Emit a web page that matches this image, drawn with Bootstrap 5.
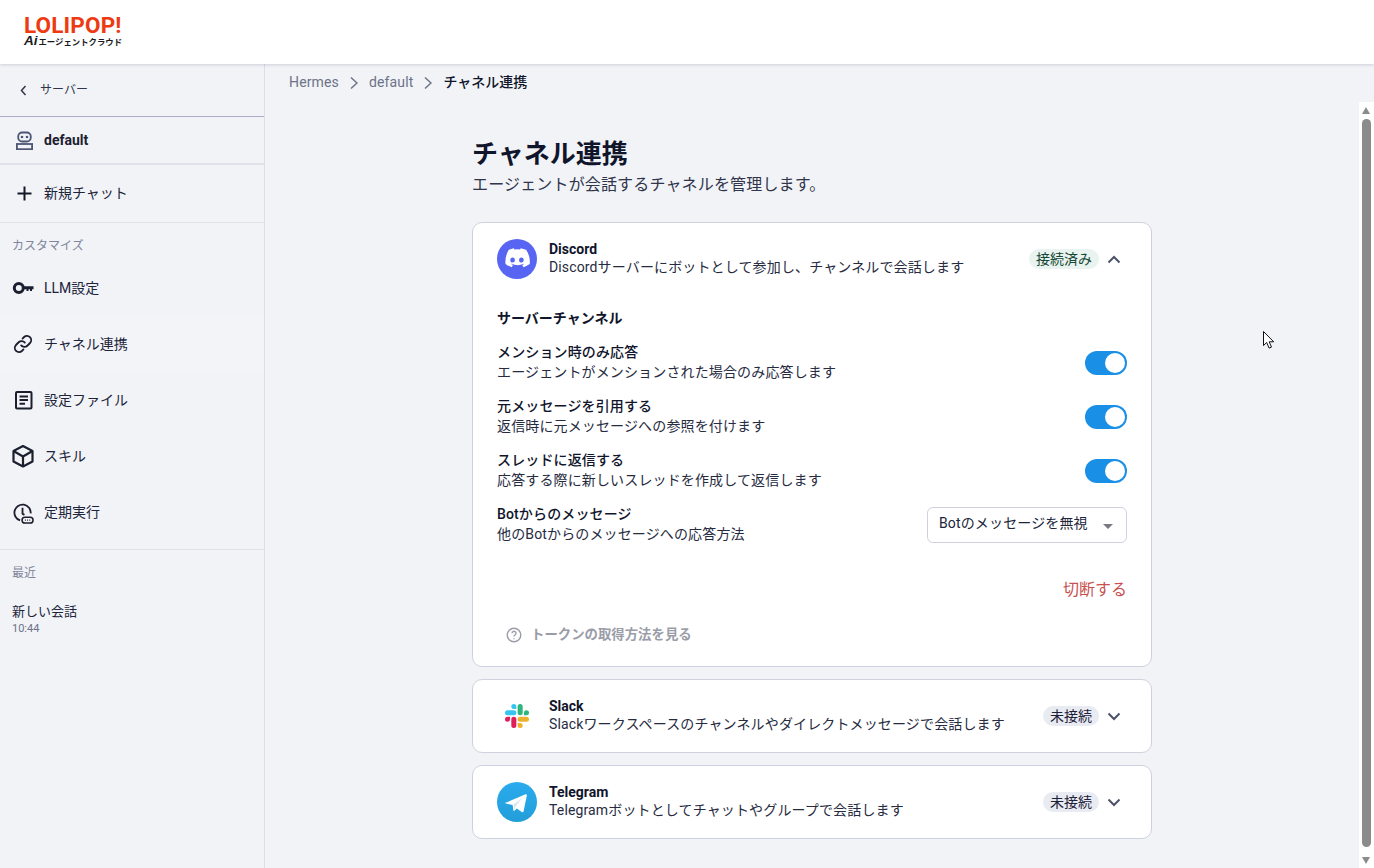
<!DOCTYPE html>
<html lang="ja">
<head>
    <meta charset="UTF-8">
    <meta name="viewport" content="width=device-width, initial-scale=1.0">
    <title>チャネル連携</title>
    <link href="https://cdn.jsdelivr.net/npm/bootstrap@5.3.0/dist/css/bootstrap.min.css" rel="stylesheet">
    <style>
        html, body { height: 100%; overflow: hidden; }
        body {
            background: #f1f3f7;
            color: #10152b;
            font-family: Roboto, "Noto Sans CJK JP", sans-serif;
            font-size: 14px;
        }
        .top-bar {
            height: 64px;
            background: #fff;
            box-shadow: 0 1px 3px rgba(20, 25, 50, .16);
            position: relative;
            z-index: 2;
            padding: 0 0 3px 24px;
        }
        .logo-main { color: #ee3a12; font: 700 22.5px/20px Roboto, sans-serif; letter-spacing: .15px; }
        .logo-sub { color: #1a1a22; font: 700 8.4px/12px "Noto Sans CJK JP", sans-serif; white-space: nowrap; }
        .logo-sub i { font: italic 900 13.5px/0 "Liberation Sans", sans-serif; margin-right: 1px; }
        .page-body { height: 804px; }
        .side-bar { width: 265px; border-right: 1px solid #dcdee6; flex: none; }
        .side-back { height: 53px; padding-left: 20px; border-bottom: 1px solid #a9aec6; font-size: 12px; color: #30354a; gap: 13px; }
        .side-server { height: 48px; padding-left: 16px; border-bottom: 2px solid #e0e2ea; font-weight: 700; gap: 11px; color: #1c2030; }
        .side-new { height: 58px; padding-left: 16px; border-bottom: 1px solid #e0e2ea; gap: 11px; color: #20243a; }
        .side-label { font-size: 12px; color: #80859a; padding: 14px 0 0 12px; margin-bottom: 5px; }
        .side-item { height: 56px; padding-left: 12px; gap: 10px; color: #20243a; }
        .side-item.is-current { background: #f3f4f8; }
        .side-recent { border-top: 1px solid #e0e2ea; margin-top: 9px; }
        .recent-entry { padding: 16px 0 0 12px; }
        .recent-name { color: #20243a; font-size: 13px; line-height: 18px; }
        .recent-time { color: #6d7288; font-size: 11px; line-height: 14px; margin-top: 1px; }
        .crumbs { height: 38px; padding: 8px 0 0 24px; color: #6d7288; gap: 11px; }
        .crumbs span { letter-spacing: .01em; }
        .crumbs b { color: #10152b; font-weight: 500; }
        .scroll-zone { height: 766px; }
        .scroll-inner { flex: 1; }
        .content-col { width: 680px; margin-left: 207px; padding-top: 33px; }
        .page-title { font-size: 26px; font-weight: 700; line-height: 38px; margin: 0; color: #10152b; }
        .page-sub { font-size: 16px; line-height: 24px; color: #30354a; margin-bottom: 25px; letter-spacing: .01em; }
        .chan-card { background: #fff; border: 1px solid #cfd2de; border-radius: 10px; margin-bottom: 12px; padding: 16px 24px; }
        .chan-card.is-open { padding-bottom: 20px; }
        .chan-head { height: 40px; }
        .chan-text { padding-bottom: 2px; }
        .chan-title { font-weight: 700; line-height: 18px; }
        .chan-desc { line-height: 18px; color: #272b3f; letter-spacing: .01em; }
        .chan-icon { width: 40px; height: 40px; flex: none; margin-right: 12px; }
        .pill { border-radius: 10px; padding: 0 7px; line-height: 20px; margin-right: 8px; }
        .pill-ok { background: #e9f4f0; color: #154734; }
        .pill-off { background: #e9ebf2; color: #1d2238; }
        .chev { margin-right: 6px; }
        .sect-title { font-weight: 700; line-height: 20px; margin-top: 29px; margin-bottom: 10px; }
        .opt-row { height: 54px; padding-bottom: 4px; }
        .opt-text { margin-bottom: 2px; letter-spacing: .01em; }
        .opt-name { font-weight: 500; line-height: 20px; }
        .opt-desc { line-height: 20px; color: #272b3f; }
        .switch-on { width: 42px; height: 24px; border-radius: 12px; background: #1a8fe6; padding: 2px; }
        .switch-on span { width: 20px; height: 20px; border-radius: 50%; background: #fff; }
        .fake-select { width: 200px; height: 36px; border: 1px solid #cfd2de; border-radius: 6px; padding: 0 13px 0 11px; color: #20243a; letter-spacing: .01em; }
        .fake-select span { margin-bottom: 3px; }
        .fake-select i { border-left: 5px solid transparent; border-right: 5px solid transparent; border-top: 5px solid #7a7a82; margin-top: 3px; }
        .cut-link { color: #c9504f; font-size: 16px; line-height: 22px; margin-top: 25px; }
        .help-link { color: #9a9da8; font-size: 13.4px; font-weight: 700; gap: 9px; margin-top: 23px; padding-left: 9px; line-height: 22px; }
        .bar-track { width: 15px; background: #fff; flex: none; position: relative; }
        .bar-thumb { position: absolute; left: 3px; top: 17px; bottom: 21px; width: 9px; border-radius: 5px; background: #8b8b8b; }
        .bar-up, .bar-down { position: absolute; left: 3px; border-left: 4.5px solid transparent; border-right: 4.5px solid transparent; }
        .bar-up { top: 5px; border-bottom: 7px solid #8b8b8b; }
        .bar-down { bottom: 4px; border-top: 7px solid #8b8b8b; }
        .mouse-mark { position: absolute; left: 1263px; top: 331px; z-index: 5; }
    </style>
</head>
<body>
    <header class="top-bar d-flex flex-column justify-content-center">
        <div class="logo-main">LOLIPOP!</div>
        <div class="logo-sub"><i>Ai</i>エージェントクラウド</div>
    </header>

    <div class="page-body d-flex">
        <aside class="side-bar">
            <div class="side-back d-flex align-items-center">
                <svg width="7" height="11" viewBox="0 0 7 11" fill="none" stroke="#30354a" stroke-width="1.5"><path d="M5.5 1 1.5 5.500l4 4.500"/></svg>
                <span>サーバー</span>
            </div>
            <div class="side-server d-flex align-items-center">
                <svg width="17" height="19" viewBox="0 0 17 19" fill="none" stroke="#4d5674" stroke-width="1.8"><rect x="2.200" y="1.500" width="12.600" height="9" rx="4"/><rect x=".9" y="13" width="15.200" height="5.200"/><circle cx="6" cy="6" r="1.300" fill="#4d5674" stroke="none"/><circle cx="11" cy="6" r="1.300" fill="#4d5674" stroke="none"/></svg>
                <span>default</span>
            </div>
            <div class="side-new d-flex align-items-center">
                <svg width="17" height="17" viewBox="0 0 17 17" fill="none" stroke="#14172a" stroke-width="2"><path d="M8.500 1.500v14M1.500 8.500h14"/></svg>
                <span>新規チャット</span>
            </div>
            <div class="side-label">カスタマイズ</div>
            <div class="side-item d-flex align-items-center">
                <svg width="22" height="22" viewBox="0 0 22 22" fill="none"><circle cx="6.800" cy="11" r="4.500" stroke="#1b1e2e" stroke-width="3"/><path d="M11 9.300h10.500v3H20V14h-2v-1.700h-1.500V14h-2v-1.700H11z" fill="#1b1e2e"/></svg>
                <span>LLM設定</span>
            </div>
            <div class="side-item is-current d-flex align-items-center">
                <svg width="22" height="22" viewBox="0 0 24 24" fill="none" stroke="#1b1e2e" stroke-width="2" stroke-linecap="round"><path d="M10 13.500a4.500 4.500 0 0 0 6.700.4l3-3a4.600 4.600 0 0 0-6.500-6.500l-1.700 1.700"/><path d="M14 10.500a4.500 4.500 0 0 0-6.700-.4l-3 3a4.600 4.600 0 0 0 6.500 6.500l1.700-1.700"/></svg>
                <span>チャネル連携</span>
            </div>
            <div class="side-item d-flex align-items-center">
                <svg width="22" height="22" viewBox="0 0 22 22" fill="none" stroke="#1b1e2e" stroke-width="2"><rect x="4" y="3" width="15.500" height="16.500" rx="1"/><path d="M7.500 7.500h8.500M7.500 11h8.500M7.500 14.800h5.500"/></svg>
                <span>設定ファイル</span>
            </div>
            <div class="side-item d-flex align-items-center">
                <svg width="22" height="24" viewBox="0 0 22 24" fill="none" stroke="#1b1e2e" stroke-width="2.200" stroke-linejoin="round"><path d="M11 2 20.500 7v10.500L11 22.500 1.500 17.500V7z"/><path d="M1.500 7 11 12.500 20.500 7M11 12.500v10"/></svg>
                <span>スキル</span>
            </div>
            <div class="side-item d-flex align-items-center">
                <svg width="22" height="23" viewBox="0 0 23 24" fill="none" stroke="#1b1e2e" stroke-width="1.900"><path d="M8.500 20.300A8.500 8.500 0 1 1 19.500 13"/><path d="M11 7v6.300l2 1.200"/><rect x="10.500" y="17" width="11.500" height="6" rx="3" stroke-width="1.600"/><path d="M13.500 20h1M15.800 20h1M18.100 20h1" stroke-width="1.500"/></svg>
                <span>定期実行</span>
            </div>
            <div class="side-recent">
                <div class="side-label">最近</div>
                <div class="recent-entry">
                    <div class="recent-name">新しい会話</div>
                    <div class="recent-time">10:44</div>
                </div>
            </div>
        </aside>

        <main class="flex-grow-1">
            <nav class="crumbs d-flex align-items-start">
                <span>Hermes</span>
                <svg class="mt-1" width="8" height="14" viewBox="0 0 8 14" fill="none" stroke="#6d7288" stroke-width="1.500"><path d="m1 1.500 6 5.500-6 5.500"/></svg>
                <span>default</span>
                <svg class="mt-1" width="8" height="14" viewBox="0 0 8 14" fill="none" stroke="#6d7288" stroke-width="1.500"><path d="m1 1.500 6 5.500-6 5.500"/></svg>
                <b>チャネル連携</b>
            </nav>
            <div class="scroll-zone d-flex">
                <div class="scroll-inner">
                    <div class="content-col">
                        <h1 class="page-title">チャネル連携</h1>
                        <div class="page-sub">エージェントが会話するチャネルを管理します。</div>

                        <section class="chan-card is-open">
                            <div class="chan-head d-flex align-items-center">
                                <svg class="chan-icon" viewBox="0 0 40 40"><circle cx="20" cy="20" r="20" fill="#5865f2"/><path d="M29.300 12.900a21 21 0 0 0-5.300-1.700l-.7 1.400a19.500 19.500 0 0 0-5.900 0l-.7-1.400a21 21 0 0 0-5.300 1.700C8.300 18 7.400 22.900 7.900 27.800a21.300 21.300 0 0 0 6.500 3.300l1.400-2.200-2.100-1 .5-.4a15.200 15.200 0 0 0 12.900 0l.5.4-2.100 1 1.400 2.200a21.300 21.300 0 0 0 6.500-3.300c.6-5.700-.9-10.500-3.800-14.900z" fill="#fff" transform="translate(1 -1.400) scale(.95)"/><ellipse cx="15.600" cy="21" rx="2.300" ry="2.600" fill="#5865f2"/><ellipse cx="24.400" cy="21" rx="2.300" ry="2.600" fill="#5865f2"/></svg>
                                <div class="flex-grow-1 chan-text">
                                    <div class="chan-title">Discord</div>
                                    <div class="chan-desc">Discordサーバーにボットとして参加し、チャンネルで会話します</div>
                                </div>
                                <span class="pill pill-ok">接続済み</span>
                                <svg class="chev" width="14" height="9" viewBox="0 0 14 9" fill="none" stroke="#4d5268" stroke-width="2"><path d="m1.500 7.500 5.500-5.500 5.500 5.500"/></svg>
                            </div>

                            <div class="sect-title">サーバーチャンネル</div>

                            <div class="opt-row d-flex align-items-center justify-content-between">
                                <div class="opt-text"><div class="opt-name">メンション時のみ応答</div><div class="opt-desc">エージェントがメンションされた場合のみ応答します</div></div>
                                <div class="switch-on d-flex justify-content-end"><span></span></div>
                            </div>
                            <div class="opt-row d-flex align-items-center justify-content-between">
                                <div class="opt-text"><div class="opt-name">元メッセージを引用する</div><div class="opt-desc">返信時に元メッセージへの参照を付けます</div></div>
                                <div class="switch-on d-flex justify-content-end"><span></span></div>
                            </div>
                            <div class="opt-row d-flex align-items-center justify-content-between">
                                <div class="opt-text"><div class="opt-name">スレッドに返信する</div><div class="opt-desc">応答する際に新しいスレッドを作成して返信します</div></div>
                                <div class="switch-on d-flex justify-content-end"><span></span></div>
                            </div>
                            <div class="opt-row d-flex align-items-center justify-content-between">
                                <div class="opt-text"><div class="opt-name">Botからのメッセージ</div><div class="opt-desc">他のBotからのメッセージへの応答方法</div></div>
                                <div class="fake-select d-flex align-items-center justify-content-between"><span>Botのメッセージを無視</span><i></i></div>
                            </div>

                            <div class="cut-link text-end">切断する</div>
                            <div class="help-link d-flex align-items-center">
                                <svg width="16" height="16" viewBox="0 0 16 16" fill="none" stroke="#9a9da8" stroke-width="1.400"><circle cx="8" cy="8" r="6.800"/><path d="M6 6.200a2 2 0 1 1 3 1.800c-.7.400-1 .8-1 1.600M8 11.300v.9"/></svg>
                                <span>トークンの取得方法を見る</span>
                            </div>
                        </section>

                        <section class="chan-card">
                            <div class="chan-head d-flex align-items-center">
                                <svg class="chan-icon" viewBox="0 0 40 40">
                                    <g transform="translate(8 8)">
                                        <path fill="#e01e5a" d="M5.042 15.165a2.528 2.528 0 0 1-2.52 2.523A2.528 2.528 0 0 1 0 15.165a2.527 2.527 0 0 1 2.522-2.52h2.52v2.52zM6.313 15.165a2.527 2.527 0 0 1 2.521-2.52 2.527 2.527 0 0 1 2.521 2.52v6.313A2.528 2.528 0 0 1 8.834 24a2.528 2.528 0 0 1-2.521-2.522v-6.313z"/>
                                        <path fill="#36c5f0" d="M8.834 5.042a2.528 2.528 0 0 1-2.521-2.52A2.528 2.528 0 0 1 8.834 0a2.528 2.528 0 0 1 2.521 2.522v2.52H8.834zM8.834 6.313a2.528 2.528 0 0 1 2.521 2.521 2.528 2.528 0 0 1-2.521 2.521H2.522A2.528 2.528 0 0 1 0 8.834a2.528 2.528 0 0 1 2.522-2.521h6.312z"/>
                                        <path fill="#2eb67d" d="M18.956 8.834a2.528 2.528 0 0 1 2.522-2.521A2.528 2.528 0 0 1 24 8.834a2.528 2.528 0 0 1-2.522 2.521h-2.522V8.834zM17.688 8.834a2.528 2.528 0 0 1-2.523 2.521 2.527 2.527 0 0 1-2.52-2.521V2.522A2.527 2.527 0 0 1 15.165 0a2.528 2.528 0 0 1 2.523 2.522v6.312z"/>
                                        <path fill="#ecb22e" d="M15.165 18.956a2.528 2.528 0 0 1 2.523 2.522A2.528 2.528 0 0 1 15.165 24a2.527 2.527 0 0 1-2.52-2.522v-2.522h2.52zM15.165 17.688a2.527 2.527 0 0 1-2.52-2.523 2.526 2.526 0 0 1 2.52-2.52h6.313A2.527 2.527 0 0 1 24 15.165a2.528 2.528 0 0 1-2.522 2.523h-6.313z"/>
                                    </g>
                                </svg>
                                <div class="flex-grow-1 chan-text">
                                    <div class="chan-title">Slack</div>
                                    <div class="chan-desc">Slackワークスペースのチャンネルやダイレクトメッセージで会話します</div>
                                </div>
                                <span class="pill pill-off">未接続</span>
                                <svg class="chev" width="14" height="9" viewBox="0 0 14 9" fill="none" stroke="#4d5268" stroke-width="2"><path d="m1.500 1.500 5.500 5.500 5.500-5.500"/></svg>
                            </div>
                        </section>

                        <section class="chan-card">
                            <div class="chan-head d-flex align-items-center">
                                <svg class="chan-icon" viewBox="0 0 40 40"><defs><linearGradient id="tgFill" x1="0" y1="0" x2="0" y2="1"><stop offset="0" stop-color="#2aabee"/><stop offset="1" stop-color="#229ed9"/></linearGradient></defs><circle cx="20" cy="20" r="20" fill="url(#tgFill)"/><path d="M9.500 20.500 28.500 12.300c.9-.3 1.600.2 1.300 1.400l-3.200 15.500c-.2 1.100-.9 1.400-1.800.9l-5-3.700-2.400 2.300c-.5.500-.9.500-1-.2l-.8-5.600-6.600-1.300c-.9-.3-.9-.9.500-1.300z" fill="#fff"/><path d="m16.600 22.400 8.400-5.900-6.200 7.400-.9 3.500z" fill="#d3e7f3"/></svg>
                                <div class="flex-grow-1 chan-text">
                                    <div class="chan-title">Telegram</div>
                                    <div class="chan-desc">Telegramボットとしてチャットやグループで会話します</div>
                                </div>
                                <span class="pill pill-off">未接続</span>
                                <svg class="chev" width="14" height="9" viewBox="0 0 14 9" fill="none" stroke="#4d5268" stroke-width="2"><path d="m1.500 1.500 5.500 5.500 5.500-5.500"/></svg>
                            </div>
                        </section>
                    </div>
                </div>
                <div class="bar-track"><div class="bar-up"></div><div class="bar-thumb"></div><div class="bar-down"></div></div>
            </div>
        </main>
    </div>

    <svg class="mouse-mark" width="13" height="18" viewBox="0 0 13 18"><path d="M.5.500v14l3.200-3 2.400 5.600 2.400-1-2.300-5.300h4.500z" fill="#fff" stroke="#111" stroke-width="1"/></svg>

    <script src="https://cdn.jsdelivr.net/npm/bootstrap@5.3.0/dist/js/bootstrap.bundle.min.js"></script>
</body>
</html>
